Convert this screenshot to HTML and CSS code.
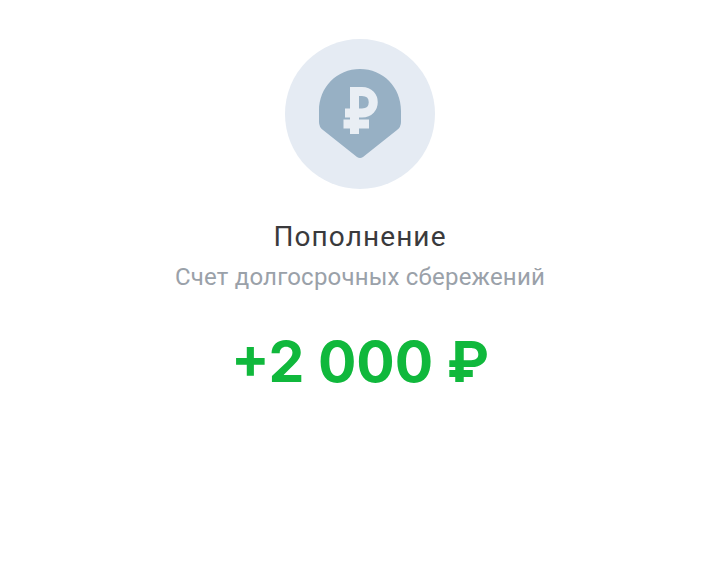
FILE: index.html
```html
<!DOCTYPE html>
<html>
	<head>
		<meta charset="utf-8">
		<title>Пополнение</title>
		<link rel="stylesheet" href="styles.css">
	</head>
	<body>
		<div class="operation">
			<div class="opIcon">
				<svg width="150" height="150" viewBox="0 0 150 150">
					<path class="pin" d="M75 30C52 30 34 48 34 72V83Q34 88 38 91L72 118Q75 120 78 118L112 91Q116 88 116 83V72C116 48 98 30 75 30Z"/>
					<path class="rub" d="M69.500 95V52.500H77C92 52.500 92 74 77 74H60M58.500 85H84"/>
				</svg>
			</div>
			<div class="opTitle">Пополнение</div>
			<div class="opSub">Счет долгосрочных сбережений</div>
			<div class="opSum">+2 000 ₽</div>
		</div>
	</body>
</html>
```

FILE: styles.css
```css
*{
	padding: 0;
	margin: 0;
}
body{
	background-color: #fff;
	font-family: "Roboto", "Liberation Sans", sans-serif;
}
.operation{
	display: flex;
	flex-direction: column;
	align-items: center;
	padding-top: 39px;
	padding-left: 2px;
}
.opIcon{
	width: 150px;
	height: 150px;
	border-radius: 50%;
	background-color: #e5ebf3;
}
.opIcon svg{
	display: block;
}
.pin{
	fill: #97b0c4;
}
.rub{
	fill: none;
	stroke: #e9eef4;
	stroke-width: 9;
}
.opTitle{
	margin-top: 30px;
	font-size: 28px;
	line-height: 36px;
	letter-spacing: 1.100px;
	color: #3a3a3c;
}
.opSub{
	margin-top: 6px;
	font-size: 24px;
	line-height: 32px;
	letter-spacing: .2px;
	color: #9aa1a9;
}
.opSum{
	margin-top: 35px;
	font-family: "Inter", "Roboto", sans-serif;
	font-size: 57px;
	line-height: 68px;
	font-weight: 700;
	color: #10b83c;
}
```
